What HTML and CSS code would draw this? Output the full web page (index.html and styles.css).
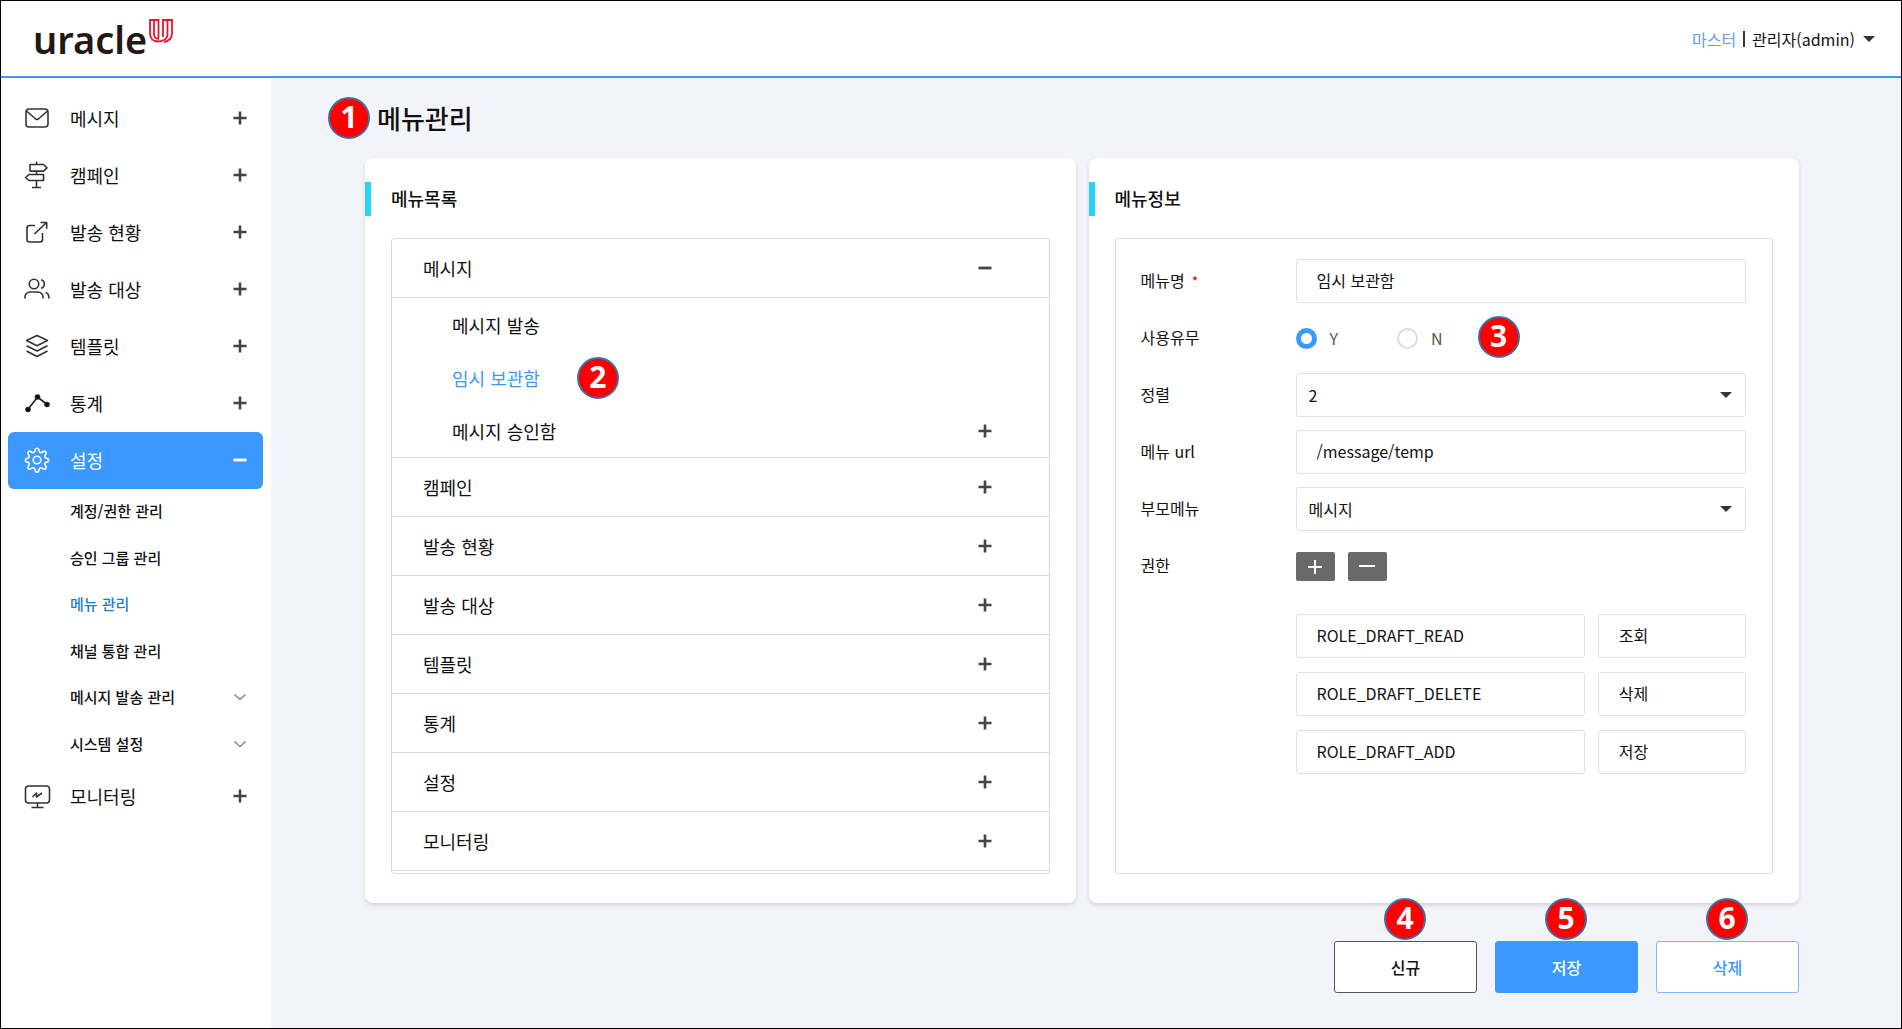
FILE: index.html
```html
<!DOCTYPE html>
<html lang="ko">
<head>
<meta charset="utf-8">
<title>메뉴관리</title>
<link rel="stylesheet" href="styles.css">
</head>
<body>
<svg width="0" height="0" class="sprite" aria-hidden="true">
  <symbol id="plus" viewBox="0 0 14 14"><path d="M7 .5v13M.5 7h13" fill="none" stroke="currentColor" stroke-width="2.600"/></symbol>
  <symbol id="minus" viewBox="0 0 14 14"><path d="M.5 7h13" fill="none" stroke="currentColor" stroke-width="2.800"/></symbol>
  <symbol id="chevron" viewBox="0 0 14 14"><path d="M1.500 4.500L7 9.500l5.500-5" fill="none" stroke="#888" stroke-width="1.500"/></symbol>
</svg>
<div class="app">
  <header class="header">
    <a class="logo" href="#" aria-label="uracle">
      <span class="logo-text">uracle</span>
      <svg class="logo-mark" width="24" height="24" viewBox="0 0 24 24" fill="none" stroke="#e8142c" stroke-width="1.800"><path d="M9.500 19V1H1v13c0 5 3 8.500 8 8.500 2 0 4-.5 5.500-1.500"/><path d="M5 1v14c0 3 1.500 4.700 5 5"/><path d="M14 18V1h9v13c0 5-3 8-8 9"/><path d="M18.500 1v14c0 3-1 5-4 6"/></svg>
    </a>
    <div class="user">
      <span class="role">마스터</span><span class="bar"></span>
      <button class="user-menu" type="button">관리자(admin)<span class="caret"></span></button>
    </div>
  </header>
  <div class="body">
    <nav class="sidebar">
      <ul class="nav">
        <li><a class="nav-item" href="#"><svg class="nav-icon" viewBox="0 0 26 26"><rect x="2" y="4" width="22" height="18" rx="3"/><path d="M2.500 6l9.200 8q1.300 1 2.600 0L23.500 6"/></svg><span>메시지</span><svg class="sign"><use href="#plus"/></svg></a></li>
        <li><a class="nav-item" href="#"><svg class="nav-icon" viewBox="0 0 26 26"><path d="M12.500-.5v3M6 2.500h13.500l3.500 3.300-3.500 3.300H6zM12.500 9v3.500M19.500 12.500H5l-3.500 3L5 18.500h14.500zM12.500 18.500v7M8 25.500h9"/></svg><span>캠페인</span><svg class="sign"><use href="#plus"/></svg></a></li>
        <li><a class="nav-item" href="#"><svg class="nav-icon" viewBox="0 0 26 26"><path d="M11 6.500H5.500a2.500 2.500 0 0 0-2.500 2.500v11.500a2.500 2.500 0 0 0 2.500 2.500H16a2.500 2.500 0 0 0 2.500-2.500V14M10.500 15L22.500 3.500M16.500 3.500h6.200v6.200"/></svg><span>발송 현황</span><svg class="sign"><use href="#plus"/></svg></a></li>
        <li><a class="nav-item" href="#"><svg class="nav-icon" viewBox="0 0 26 26"><circle cx="10" cy="8" r="4.700"/><path d="M1 22.500v-1.500a5 5 0 0 1 5-5h8a5 5 0 0 1 5 5v1.500M17 3.800c4.500 1 4.500 7.400 0 8.500M21.500 16.500c2.500.5 3.500 3 3.500 6"/></svg><span>발송 대상</span><svg class="sign"><use href="#plus"/></svg></a></li>
        <li><a class="nav-item" href="#"><svg class="nav-icon" viewBox="0 0 26 26"><path d="M13 2.500l10.500 5L13 12.800 2.500 7.500zM2.500 12.800L13 18l10.500-5.200M2.500 18L13 23.500 23.500 18"/></svg><span>템플릿</span><svg class="sign"><use href="#plus"/></svg></a></li>
        <li><a class="nav-item" href="#"><svg class="nav-icon solid" viewBox="0 0 26 26"><path d="M4 19.500L13.500 7 23 14.500"/><circle cx="4" cy="19.500" r="2"/><circle cx="13.500" cy="7" r="2"/><circle cx="23" cy="14.500" r="2"/></svg><span>통계</span><svg class="sign"><use href="#plus"/></svg></a></li>
        <li>
          <a class="nav-item active" href="#"><svg class="nav-icon" viewBox="0 0 26 26"><circle cx="13" cy="13" r="3.800"/><path d="M11.200 2.600a1.900 1.900 0 0 1 3.600 0l.3 1.500q.2 1 1.200 1.400t1.900-.2l1.100-.8a1.900 1.900 0 0 1 2.600 2.600l-.8 1.100q-.6.900-.2 1.900t1.400 1.200l1.300.2a1.900 1.900 0 0 1 0 3.400l-1.300.2q-1 .2-1.400 1.200t.2 1.900l.8 1.100a1.900 1.900 0 0 1-2.600 2.600l-1.100-.8q-.9-.6-1.900-.2t-1.200 1.400l-.3 1.500a1.900 1.900 0 0 1-3.600 0l-.3-1.500q-.2-1-1.200-1.400t-1.900.2l-1.100.8a1.900 1.900 0 0 1-2.600-2.600l.8-1.100q.6-.9.2-1.900t-1.400-1.200l-1.300-.2a1.900 1.900 0 0 1 0-3.400l1.300-.2q1-.2 1.400-1.200t-.2-1.900l-.8-1.100a1.900 1.900 0 0 1 2.600-2.600l1.100.8q.9.600 1.900.2t1.200-1.400z"/></svg><span>설정</span><svg class="sign"><use href="#minus"/></svg></a>
          <ul class="subnav">
            <li><a href="#">계정/권한 관리</a></li>
            <li><a href="#">승인 그룹 관리</a></li>
            <li><a class="current" href="#">메뉴 관리</a></li>
            <li><a href="#">채널 통합 관리</a></li>
            <li><a href="#">메시지 발송 관리<svg class="sign"><use href="#chevron"/></svg></a></li>
            <li><a href="#">시스템 설정<svg class="sign"><use href="#chevron"/></svg></a></li>
          </ul>
        </li>
        <li><a class="nav-item" href="#"><svg class="nav-icon" viewBox="0 0 26 26"><rect x="1.500" y="3" width="24" height="17" rx="3"/><path d="M13.500 20v4M7.500 24.500h12M8.500 14l4-4v4l5.500-4"/></svg><span>모니터링</span><svg class="sign"><use href="#plus"/></svg></a></li>
      </ul>
    </nav>
    <main class="main">
      <h1 class="title">메뉴관리<span class="badge badge-title">1</span></h1>
      <div class="cards">
        <section class="card">
          <h2>메뉴목록</h2>
          <div class="box">
            <ul class="tree">
              <li>
                <button class="tree-row" type="button">메시지<svg class="sign"><use href="#minus"/></svg></button>
                <ul class="subtree">
                  <li><button type="button">메시지 발송</button></li>
                  <li><button class="selected" type="button">임시 보관함<span class="badge badge-side">2</span></button></li>
                  <li><button type="button">메시지 승인함<svg class="sign"><use href="#plus"/></svg></button></li>
                </ul>
              </li>
              <li><button class="tree-row" type="button">캠페인<svg class="sign"><use href="#plus"/></svg></button></li>
              <li><button class="tree-row" type="button">발송 현황<svg class="sign"><use href="#plus"/></svg></button></li>
              <li><button class="tree-row" type="button">발송 대상<svg class="sign"><use href="#plus"/></svg></button></li>
              <li><button class="tree-row" type="button">템플릿<svg class="sign"><use href="#plus"/></svg></button></li>
              <li><button class="tree-row" type="button">통계<svg class="sign"><use href="#plus"/></svg></button></li>
              <li><button class="tree-row" type="button">설정<svg class="sign"><use href="#plus"/></svg></button></li>
              <li><button class="tree-row" type="button">모니터링<svg class="sign"><use href="#plus"/></svg></button></li>
            </ul>
          </div>
        </section>
        <section class="card">
          <h2>메뉴정보</h2>
          <form class="box form" id="menu-form">
            <label for="name">메뉴명<span class="required">*</span></label>
            <input class="field" id="name" type="text" value="임시 보관함">
            <span class="label" id="use-label">사용유무</span>
            <div class="radios" role="radiogroup" aria-labelledby="use-label">
              <label class="radio"><input type="radio" name="use" checked>Y</label>
              <label class="radio"><input type="radio" name="use">N<span class="badge badge-side">3</span></label>
            </div>
            <label for="order">정렬</label>
            <div class="select"><select class="field" id="order"><option>2</option></select><span class="caret"></span></div>
            <label for="url">메뉴 url</label>
            <input class="field" id="url" type="text" value="/message/temp">
            <label for="parent">부모메뉴</label>
            <div class="select"><select class="field" id="parent"><option>메시지</option></select><span class="caret"></span></div>
            <span class="label">권한</span>
            <div class="tools">
              <button type="button" aria-label="권한 추가"><svg viewBox="0 0 14 14"><path d="M7 1v14M0 8h14"/></svg></button>
              <button type="button" aria-label="권한 제거"><svg viewBox="0 0 14 14"><path d="M-1 7h16"/></svg></button>
            </div>
            <div class="roles">
              <input class="field" type="text" value="ROLE_DRAFT_READ" aria-label="권한 코드 1"><input class="field" type="text" value="조회" aria-label="권한 이름 1">
              <input class="field" type="text" value="ROLE_DRAFT_DELETE" aria-label="권한 코드 2"><input class="field" type="text" value="삭제" aria-label="권한 이름 2">
              <input class="field" type="text" value="ROLE_DRAFT_ADD" aria-label="권한 코드 3"><input class="field" type="text" value="저장" aria-label="권한 이름 3">
            </div>
          </form>
        </section>
      </div>
      <div class="actions">
        <button class="btn btn-new" type="button">신규<span class="badge badge-top">4</span></button>
        <button class="btn btn-save" type="submit" form="menu-form">저장<span class="badge badge-top">5</span></button>
        <button class="btn btn-delete" type="button">삭제<span class="badge badge-top">6</span></button>
      </div>
    </main>
  </div>
</div>
</body>
</html>
```
FILE: styles.css
```css
* { box-sizing: border-box; }
body {
  margin: 0;
  color: #111;
  background: #f3f4f9;
  font: 16px/24px "Noto Sans CJK KR", "Noto Sans", sans-serif;
}
ul { margin: 0; padding: 0; list-style: none; }
a { color: inherit; text-decoration: none; }
button, input, select { color: inherit; font: inherit; }
button { margin: 0; padding: 0; border: 0; background: none; text-align: left; cursor: pointer; }
.sprite { position: absolute; }

.app { display: flex; flex-direction: column; min-height: 100vh; border: 1px solid #000; }
.header {
  display: flex;
  align-items: center;
  justify-content: space-between;
  height: 77px;
  padding: 0 26px 0 32px;
  border-bottom: 2px solid #3a98ff;
  background: #fff;
}
.logo { display: flex; align-items: flex-start; }
.logo-text { color: #231815; font: 600 38px/50px "Noto Sans", sans-serif; }
.logo-mark { margin: 5px 0 0 2px; }
.user { display: flex; align-items: center; gap: 7px; }
.role { color: #5a9cff; }
.bar { width: 2px; height: 16px; background: #333; }
.user-menu { display: flex; align-items: center; gap: 8px; }
.caret { border: 6px solid transparent; border-top-color: #333; border-bottom: 0; }

.body { display: flex; flex: 1; }
.sidebar { width: 270px; padding: 12px 8px 12px 7px; background: #fff; }
.nav-item {
  display: flex;
  align-items: center;
  height: 57px;
  padding: 0 16px 2px;
  border-radius: 6px;
  font-size: 18px;
}
.nav-item.active { color: #fff; background: #3a98ff; }
.nav-icon {
  width: 26px;
  height: 26px;
  margin-right: 20px;
  overflow: visible;
  fill: none;
  stroke: #333;
  stroke-width: 1.6;
  stroke-linejoin: round;
}
.active .nav-icon { stroke: #fff; }
.nav-icon.solid { fill: #000; stroke: #222; }
.nav-icon.solid path { fill: none; }
.sign { flex: none; width: 14px; height: 14px; margin-left: auto; color: #444; }
.active .sign { color: #fff; }
.subnav { display: flex; flex-direction: column; min-height: 279px; font-size: 15px; font-weight: 500; }
.subnav li { display: flex; flex: 1; }
.subnav a { display: flex; flex: 1; align-items: center; padding: 0 16px 2px 62px; }
.subnav .current { color: #1a7fd0; }

.main { flex: 1; padding: 22px 102px 34px 94px; }
.title { position: relative; width: fit-content; margin: 0 0 22px 12px; font-size: 26px; font-weight: 500; line-height: 36px; }
.cards { display: grid; grid-template-columns: 1fr 1fr; gap: 13px; }
.card {
  display: flex;
  flex-direction: column;
  padding: 24px 26px 29px;
  border-radius: 8px;
  background: #fff;
  box-shadow: 0 2px 4px #0002;
}
.card h2 {
  margin: 0 -26px 22px;
  padding: 0 0 2px 20px;
  border-left: 6px solid #2ad2f8;
  border-radius: 0 5px 5px 0;
  font-size: 18px;
  font-weight: 500;
  line-height: 32px;
}
.box { flex: 1; border: 1px solid #d9d9d9; border-radius: 3px; }
.tree { padding-bottom: 2px; font-size: 18px; }
.tree > li { border-bottom: 1px solid #d9d9d9; }
.tree button { display: flex; align-items: center; width: 100%; }
.tree .tree-row { height: 58px; padding: 0 57px 0 31px; }
.subtree { border-top: 1px solid #d9d9d9; }
.subtree button { height: 53px; padding: 0 57px 0 60px; }
.tree .selected { color: #3a98ff; }

.form {
  display: grid;
  grid-template-columns: 155px 1fr;
  grid-auto-rows: 44px;
  row-gap: 13px;
  align-items: center;
  padding: 20px 26px 20px 25px;
}
.form > label, .label { padding-bottom: 2px; }
.required { margin-left: 7px; color: #d00; font-size: 14px; }
.field {
  width: 100%;
  height: 44px;
  padding: 0 20px 2px;
  border: 1px solid #dfe3e9;
  border-radius: 3px;
  background: #fff;
}
.radios { display: flex; gap: 59px; }
.radio { display: flex; align-items: center; gap: 13px; height: 24px; color: #555; }
.radio input {
  width: 21px;
  height: 21px;
  margin: 0;
  border: 2px solid #ddd;
  border-radius: 50%;
  background: #fff;
  appearance: none;
}
.radio input:checked { border: 5px solid #3a98ff; }
.select { display: grid; align-items: center; }
.select > * { grid-area: 1 / 1; }
.select .field { padding: 0 12px; appearance: none; }
.select .caret { justify-self: end; margin-right: 14px; pointer-events: none; }
.tools { display: flex; gap: 13px; }
.tools button { display: grid; place-items: center; width: 39px; height: 29px; border-radius: 2px; background: #696969; }
.tools svg { width: 14px; height: 14px; overflow: visible; stroke: #fff; stroke-width: 2; }
.roles {
  display: grid;
  grid-column: 2;
  grid-template-columns: 289fr 148fr;
  gap: 14px 13px;
  align-self: start;
  margin-top: 13px;
}

.actions { display: flex; justify-content: flex-end; gap: 18px; margin-top: 38px; }
.btn {
  position: relative;
  width: 143px;
  height: 52px;
  padding-bottom: 1px;
  border: 1px solid #555;
  border-radius: 3px;
  background: #fff;
  font-weight: 500;
  text-align: center;
}
.btn-save { border-color: #3a98ff; color: #fff; background: #3a98ff; }
.btn-delete { border-color: #7ab8ff; color: #3a98ff; }

/* Numbered guide markers */
.badge {
  display: block;
  width: 42px;
  height: 42px;
  border: 2px solid #3f6fa5;
  border-radius: 50%;
  color: #fff;
  background: #f00;
  font: 700 30px/36px "Noto Sans", sans-serif;
  text-align: center;
}
.badge-title { position: absolute; top: -3px; right: calc(100% + 7px); }
.badge-side { flex: none; margin-left: 37px; }
.radio .badge-side { margin: 0 0 2px 22px; }
.badge-top { position: absolute; bottom: 52px; left: 49px; }
```
